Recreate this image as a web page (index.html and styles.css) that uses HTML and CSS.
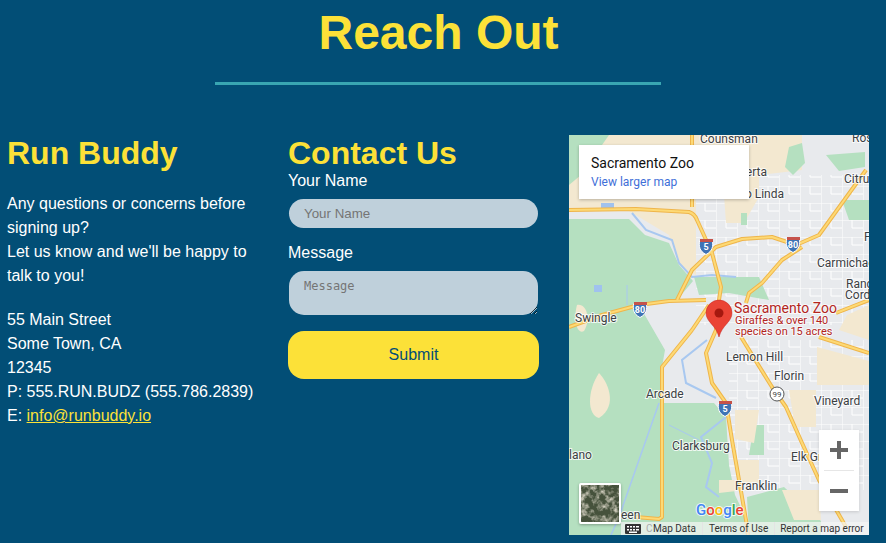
FILE: index.html
```html
<!DOCTYPE html>
<html lang="en">
<head>
  <meta charset="UTF-8">
  <meta name="viewport" content="width=device-width, initial-scale=1.0">
  <title>Run Buddy - Reach Out</title>
  <link rel="stylesheet" href="styles.css">
</head>
<body>
  <section class="page">
    <div class="section-head">
      <h1>Reach Out</h1>
      <hr class="divider">
    </div>

    <div class="contact-row">
      <div class="info-col">
        <h2>Run Buddy</h2>
        <p>Any questions or concerns before signing up?<br>Let us know and we'll be happy to talk to you!</p>
        <address>
          55 Main Street<br>
          Some Town, CA<br>
          12345<br>
          P: 555.RUN.BUDZ (555.786.2839)<br>
          E: <a href="#">info@runbuddy.io</a>
        </address>
      </div>

      <div class="form-col">
        <h2>Contact Us</h2>
        <form class="contact-form">
          <label for="name">Your Name</label>
          <input id="name" type="text" placeholder="Your Name">
          <label for="message">Message</label>
          <textarea id="message" placeholder="Message"></textarea>
          <button type="button">Submit</button>
        </form>
      </div>

      <div class="map">
        <svg class="map-art" width="300" height="400" viewBox="0 0 300 400">
          <defs>
            <pattern id="streets" width="21" height="17" patternUnits="userSpaceOnUse">
              <path d="M0 0H21M0 0V17M10 0V8H21" class="street"/>
            </pattern>
            <path id="shield" d="M-6.5 -6H6.5C7 -1 7 4 0 7.5C-7 4 -7 -1 -6.5 -6Z"/>
            <path id="highways" d="M0 75L67 74L120 77Q126 79 128 85L143 118L152 152L150 165L147 195L137 218L143 248L157 268L163 305L173 362L177 385L179 400
              M108 165L123 135L147 112L173 104L203 102L227 110L250 100L297 35
              M177 168L180 158L193 148L213 125L233 112
              M0 192L33 180L70 170L100 166L137 165
              M172 202L203 252L217 272L233 308L250 345L277 392
              M267 178L300 165M250 202L300 218
              M123 195L93 232L93 382L90 384L67 382M123 195L140 170
              M123 0V72"/>
            <filter id="sat-noise" x="0" y="0" width="100%" height="100%">
              <feTurbulence type="fractalNoise" baseFrequency="0.16" numOctaves="3" seed="7"/>
              <feColorMatrix values="0 0 0 0 0.62  0 0 0 0 0.6  0 0 0 0 0.5  3 0 0 0 -1.3"/>
            </filter>
          </defs>

          <rect class="land-urban" width="300" height="400"/>
          <rect class="grid" x="127" y="40" width="173" height="150" fill="url(#streets)"/>
          <rect class="grid" x="160" y="205" width="140" height="150" fill="url(#streets)"/>
          <path class="land-tan" d="M0 0H233V35L190 40V62L175 88H157L155 60H127V140L110 130L100 100L60 76H0Z"/>
          <path class="land-tan" d="M248 212L300 226V250H248Z"/>
          <path class="land-tan" d="M220 255H247V292H226Z"/>
          <path class="land-tan" d="M278 180L300 170V205L270 195Z"/>
          <path class="land-green" d="M0 84H60L76 100L100 108L110 130L124 146L108 165L70 170L96 215L93 232L94 268L145 268L157 282L160 330L166 360L178 385L182 400H0Z"/>
          <path class="land-green" d="M178 362L215 352L252 386V400H180Z"/>
          <path class="land-green" d="M0 0H40L26 20L12 40L0 50Z"/>
          <path class="land-green" d="M220 12L233 8L236 28L224 40L216 32Z"/>
          <path class="land-green" d="M257 20L296 17V32L270 36Z"/>
          <path class="land-green" d="M273 65H300V85H280Z"/>
          <path class="land-green" d="M172 78H178V90H172Z"/>
          <path class="land-green" d="M125 142H190L200 165L160 158L130 160Z"/>
          <path class="land-green" d="M185 290H195V320H180Z"/>
          <path class="land-tan" d="M8 170C18 168 22 185 15 196C8 200 4 185 8 170Z"/>
          <path class="land-tan" d="M30 238C38 246 50 270 30 283C18 280 18 256 30 238Z"/>
          <path class="land-tan" d="M150 345H173L176 355L150 358Z"/>
          <path class="land-tan" d="M166 275H190L185 308L166 304Z"/>
          <path class="land-tan" d="M166 325H190V348H170Z"/>
          <path class="land-tan" d="M213 355H250L252 385H225Z"/>
          <path class="river" d="M63 78L77 95L103 105L110 128L123 142L143 140L167 142"/>
          <path class="river" d="M138 205L113 225L117 248L147 263M157 282L132 302L143 328L137 352L150 362"/>
          <path class="canal" d="M90 268L50 382L42 400"/>
          <path class="canal-thin" d="M100 290L130 305M58 150V170"/>
          <path class="water-spot" d="M25 150H33V157H25ZM32 68H45V73H32Z"/>

          <use href="#highways" class="road-edge"/>
          <use href="#highways" class="road-fill"/>

          <g class="shield-blue">
            <use href="#shield" x="137" y="112"/>
            <use href="#shield" x="224" y="110"/>
            <use href="#shield" x="71" y="175"/>
            <use href="#shield" x="156" y="274"/>
          </g>
          <g class="shield-red">
            <rect x="131" y="104" width="13" height="3"/>
            <rect x="218" y="102" width="13" height="3"/>
            <rect x="65" y="167" width="13" height="3"/>
            <rect x="150" y="266" width="13" height="3"/>
          </g>
          <g class="shield-num">
            <text x="137" y="115">5</text>
            <text x="224" y="113">80</text>
            <text x="71" y="178">80</text>
            <text x="156" y="277">5</text>
          </g>
          <circle class="shield-round" cx="208" cy="259" r="7"/>
          <text class="shield-round-num" x="208" y="262">99</text>

          <g class="place">
            <text x="131" y="8">Counsman</text>
            <text x="283" y="7">Ros</text>
            <text x="198" y="41" text-anchor="end">Elverta</text>
            <text x="275" y="48">Citrus</text>
            <text x="215" y="63" text-anchor="end">Rio Linda</text>
            <text x="295" y="106">F</text>
            <text x="248" y="132">Carmichael</text>
            <text x="277" y="153">Ranc</text>
            <text x="276" y="164">Cord</text>
            <text x="6" y="187">Swingle</text>
            <text x="157" y="226">Lemon Hill</text>
            <text x="205" y="245">Florin</text>
            <text x="245" y="270">Vineyard</text>
            <text x="77" y="263">Arcade</text>
            <text x="103" y="315">Clarksburg</text>
            <text x="0" y="324">lano</text>
            <text x="222" y="326">Elk Grove</text>
            <text x="166" y="355">Franklin</text>
            <text x="52" y="384">een</text>
          </g>

          <path class="pin" d="M150 202C147 190 137 187 137 178A13 13 0 0 1 163 178C163 187 153 190 150 202Z"/>
          <circle class="pin-dot" cx="150" cy="178" r="4.5"/>
          <text class="poi-name" x="165" y="178">Sacramento Zoo</text>
          <text class="poi-sub" x="166" y="189">Giraffes &amp; over 140</text>
          <text class="poi-sub" x="166" y="200">species on 15 acres</text>

          <text class="google" x="127" y="380"><tspan class="g-blue">G</tspan><tspan class="g-red">o</tspan><tspan class="g-yellow">o</tspan><tspan class="g-blue">g</tspan><tspan class="g-green">l</tspan><tspan class="g-red">e</tspan></text>
        </svg>

        <div class="map-card">
          <div class="map-card-title">Sacramento Zoo</div>
          <a class="map-card-link" href="#">View larger map</a>
        </div>

        <div class="zoom-ctl">
          <div class="zoom-btn"><svg width="18" height="18" viewBox="0 0 18 18"><path d="M7 0H11V7H18V11H11V18H7V11H0V7H7Z"/></svg></div>
          <div class="zoom-sep"></div>
          <div class="zoom-btn"><svg width="18" height="18" viewBox="0 0 18 18"><path d="M0 7H18V11H0Z"/></svg></div>
        </div>

        <div class="thumb">
          <svg width="38" height="37" viewBox="0 0 38 37">
            <rect class="sat-base" width="38" height="37"/>
            <rect width="38" height="37" filter="url(#sat-noise)"/>
          </svg>
        </div>

        <div class="attribution">
          <svg class="kbd" width="16" height="10" viewBox="0 0 16 10">
            <rect width="16" height="10" rx="1"/>
            <path class="kbd-keys" d="M2 2H4V3.500H2ZM5 2H7V3.500H5ZM8 2H10V3.500H8ZM11 2H14V3.500H11ZM2 5H4V6.500H2ZM5 5H7V6.500H5ZM8 5H10V6.500H8ZM11 5H14V6.500H11ZM4 7.500H12V9H4Z"/>
          </svg>
          <span class="attr-ghost">C</span>
          <span class="attr-item attr-data">Map Data</span>
          <span class="attr-item">Terms of Use</span>
          <span class="attr-item attr-report">Report a map error</span>
        </div>
      </div>
    </div>
  </section>
</body>
</html>
```

FILE: styles.css
```css
* {
  box-sizing: border-box;
}
body {
  margin: 0;
  background: #024e76;
  color: #fff;
  font-family: "Liberation Sans", Arial, sans-serif;
  font-size: 16px;
  line-height: 24px;
  overflow: hidden;
}
.page {
  width: 877px;
  height: 543px;
}
.section-head {
  padding-top: 5px;
  text-align: center;
}
h1 {
  margin: 0;
  color: #fce138;
  font-size: 48px;
  line-height: 55px;
}
.divider {
  width: 446px;
  height: 3px;
  margin: 22px 216px 0 215px;
  border: 0;
  background: #39a6b2;
}
.contact-row {
  display: flex;
  margin-top: 50px;
  padding-left: 7px;
}
h2 {
  margin: 0;
  color: #fce138;
  font-size: 32px;
  line-height: 36px;
}
.info-col {
  width: 281px;
  padding-right: 20px;
}
.info-col p {
  margin: 21px 0 20px;
}
address {
  font-style: normal;
  white-space: nowrap;
}
address a {
  color: #fce138;
}
.form-col {
  width: 281px;
}
.contact-form {
  display: flex;
  flex-direction: column;
  width: 251px;
  margin-top: -2px;
}
.contact-form input,
.contact-form textarea {
  display: block;
  width: 249px;
  margin: 6px 0 13px 1px;
  padding: 0 15px;
  border: 0;
  border-radius: 15px;
  background: #bfd0db;
  color: #333;
  outline: 0;
}
.contact-form input {
  height: 29px;
  font-family: "Liberation Sans", Arial, sans-serif;
  font-size: 13.33px;
}
.contact-form textarea {
  height: 44px;
  margin: 6px 0 16px 1px;
  padding-top: 8px;
  font-family: "DejaVu Sans Mono", monospace;
  font-size: 12px;
  line-height: 14px;
}
::placeholder {
  color: #757575;
}
.contact-form button {
  height: 48px;
  border: 0;
  border-radius: 16px;
  background: #fce138;
  color: #024e76;
  font-family: "Liberation Sans", Arial, sans-serif;
  font-size: 16px;
}

/* map */
.map {
  position: relative;
  flex: none;
  width: 300px;
  height: 400px;
  overflow: hidden;
  font-family: Roboto, Arial, sans-serif;
}
.map-art {
  display: block;
}
.map-art text {
  font-family: Roboto, Arial, sans-serif;
}
.land-urban { fill: #e8eaed; }
.land-tan { fill: #f3e8d0; }
.land-green { fill: #b5e0c0; }
.street { fill: none; stroke: #fff; stroke-width: 1; }
.river { fill: none; stroke: #a8c8f0; stroke-width: 2; }
.canal { fill: none; stroke: #a8c8f0; stroke-width: 1.5; }
.canal-thin { fill: none; stroke: #a8c8f0; stroke-width: 1; }
.water-spot { fill: #a0c2ee; }
.road-edge { fill: none; stroke: #efb54a; stroke-width: 4; stroke-linejoin: round; }
.road-fill { fill: none; stroke: #fdd975; stroke-width: 2; stroke-linejoin: round; }
.shield-blue { fill: #3f73b5; stroke: #fff; stroke-width: 1; }
.shield-red { fill: #c5524a; }
.shield-num text {
  fill: #fff;
  font-size: 9px;
  font-weight: 700;
  text-anchor: middle;
}
.shield-round { fill: #fff; stroke: #555; stroke-width: 1; }
.shield-round-num {
  fill: #444;
  font-size: 8px;
  text-anchor: middle;
}
.place text {
  fill: #3c4043;
  font-size: 12px;
  stroke: #fff;
  stroke-width: 2px;
  stroke-opacity: 0.8;
  paint-order: stroke;
}
.pin { fill: #ea4335; stroke: #c5221f; stroke-width: 0.5; }
.pin-dot { fill: #a5180f; }
.poi-name, .poi-sub {
  fill: #b3261e;
  stroke: #fff;
  stroke-width: 2px;
  stroke-opacity: 0.7;
  paint-order: stroke;
}
.poi-name { font-size: 14px; }
.poi-sub { font-size: 11px; }
.google {
  font-size: 15px;
  font-weight: 500;
  stroke: #fff;
  stroke-width: 2px;
  stroke-opacity: 0.8;
  paint-order: stroke;
}
.g-blue { fill: #4285f4; }
.g-red { fill: #ea4335; }
.g-yellow { fill: #fbbc05; }
.g-green { fill: #34a853; }

.map-card {
  position: absolute;
  top: 10px;
  left: 10px;
  width: 170px;
  height: 54px;
  padding: 10px 12px;
  background: #fff;
  box-shadow: 0 1px 3px rgba(0, 0, 0, 0.25);
}
.map-card-title {
  color: #111;
  font-size: 14px;
  line-height: 17px;
}
.map-card-link {
  display: block;
  margin-top: 3px;
  color: #3f6fd8;
  font-size: 12px;
  line-height: 14px;
  text-decoration: none;
}
.zoom-ctl {
  position: absolute;
  top: 295px;
  left: 250px;
  display: flex;
  flex-direction: column;
  align-items: center;
  width: 40px;
  height: 81px;
  background: #fff;
  box-shadow: 0 1px 3px rgba(0, 0, 0, 0.15);
}
.zoom-btn {
  display: flex;
  align-items: center;
  justify-content: center;
  width: 40px;
  height: 40px;
}
.zoom-btn path {
  fill: #666;
}
.zoom-sep {
  width: 30px;
  height: 1px;
  background: #e6e6e6;
}
.thumb {
  position: absolute;
  top: 348px;
  left: 10px;
  width: 42px;
  height: 41px;
  border: 2px solid #fff;
  border-radius: 2px;
  box-shadow: 0 1px 3px rgba(0, 0, 0, 0.3);
}
.thumb svg {
  display: block;
}
.sat-base { fill: #46523c; }
.attribution {
  position: absolute;
  right: 0;
  bottom: 0;
  left: 52px;
  display: flex;
  align-items: center;
  height: 13px;
  background: rgba(245, 245, 245, 0.7);
  color: #333;
  font-size: 10px;
  line-height: 13px;
  white-space: nowrap;
}
.kbd {
  flex: none;
  margin-left: 4px;
  fill: #333;
}
.kbd-keys {
  fill: #fff;
}
.attr-ghost {
  margin-left: 5px;
  width: 6px;
  color: #aaa;
}
.attr-item {
  padding: 0 6px;
  border-left: 1px solid #e4e4e4;
}
.attr-data {
  padding: 0 6px 0 1px;
  border-left: 0;
}
.attr-report {
  padding-left: 5px;
}
```
